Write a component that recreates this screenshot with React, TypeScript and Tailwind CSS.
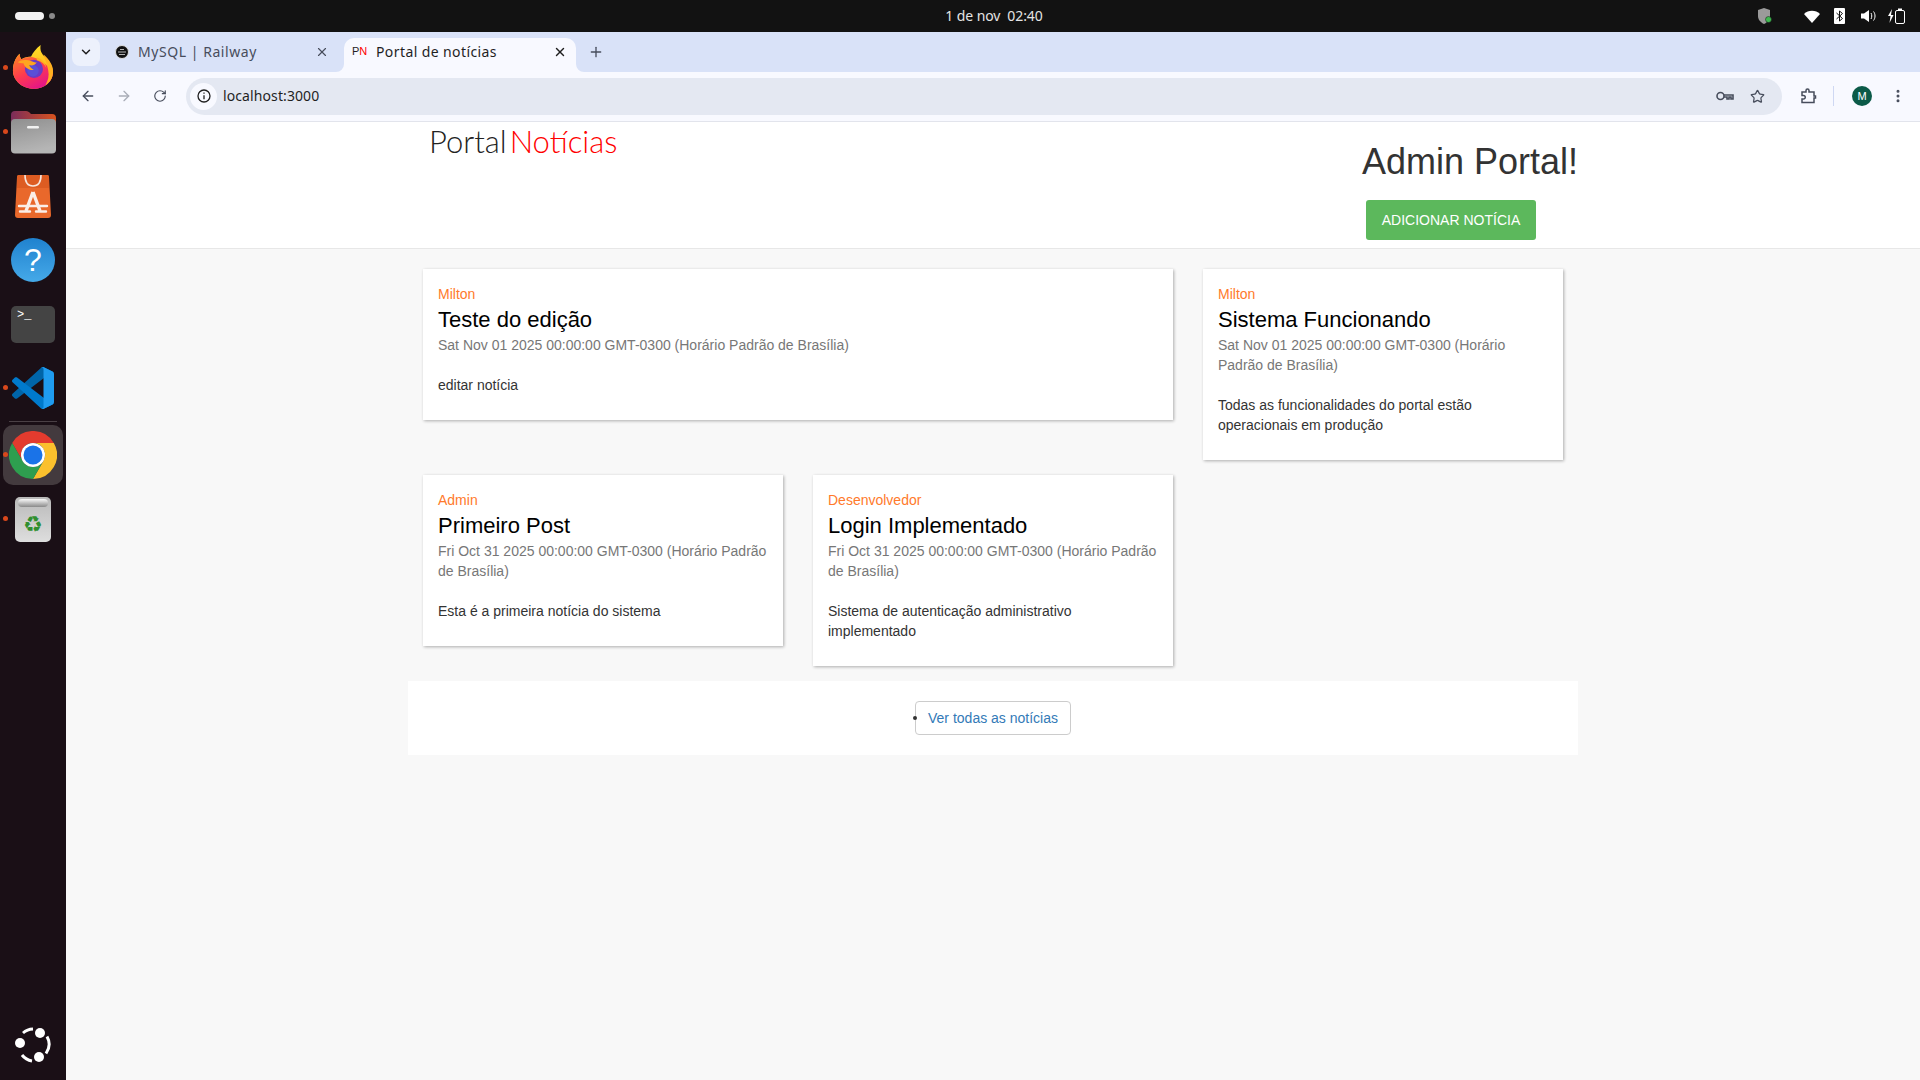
import { ArrowLeft, ArrowRight, ChevronDown, EllipsisVertical, Plus, RotateCw, Star, X } from 'lucide-react';

const news = [
  {
    author: 'Milton',
    title: 'Teste do edição',
    date: 'Sat Nov 01 2025 00:00:00 GMT-0300 (Horário Padrão de Brasília)',
    text: 'editar notícia',
    wide: true,
  },
  {
    author: 'Milton',
    title: 'Sistema Funcionando',
    date: 'Sat Nov 01 2025 00:00:00 GMT-0300 (Horário Padrão de Brasília)',
    text: 'Todas as funcionalidades do portal estão operacionais em produção',
  },
  {
    author: 'Admin',
    title: 'Primeiro Post',
    date: 'Fri Oct 31 2025 00:00:00 GMT-0300 (Horário Padrão de Brasília)',
    text: 'Esta é a primeira notícia do sistema',
  },
  {
    author: 'Desenvolvedor',
    title: 'Login Implementado',
    date: 'Fri Oct 31 2025 00:00:00 GMT-0300 (Horário Padrão de Brasília)',
    text: 'Sistema de autenticação administrativo implementado',
  },
];

const FirefoxIcon = () => (
  <svg width="42" height="44" viewBox="0 0 44 46">
    <defs>
      <linearGradient id="ffBody" x1="0" y1="0" x2="0.6" y2="1">
        <stop offset="0" stopColor="#ff8a1f" />
        <stop offset="0.55" stopColor="#ff3b4e" />
        <stop offset="1" stopColor="#e31587" />
      </linearGradient>
      <linearGradient id="ffFlame" x1="0.4" y1="0" x2="0.6" y2="1">
        <stop offset="0" stopColor="#ffe226" />
        <stop offset="1" stopColor="#ff9a1e" />
      </linearGradient>
    </defs>
    <path d="M30 0c-1 6 1 9 5 13 5 5 8 10 8 15 0 10-9 18-20 18S1 38 1 27C1 20 3 14 8 9c0 3 1 5 2 6 3-2 7-3 10-3 2-4 5-8 10-12z" fill="url(#ffFlame)" />
    <path d="M1 27C1 20 3 14 8 9c0 3 1 5 2 6 3-2 8-3 13-2 8 2 13 8 20 15 0 10-9 18-20 18S1 38 1 27z" fill="url(#ffBody)" />
    <path d="M33 10c6 5 10 11 10 18 0 6-3 11-8 14 3-5 4-10 3-15-1-6-3-11-5-17z" fill="#ffb020" />
    <circle cx="23" cy="25" r="9.500" fill="#6a3bc4" />
    <circle cx="22" cy="27" r="6" fill="#5a4fd6" />
    <path d="M6 18c3-2 6-3 11-2 4 .5 6 3 9 2-2 3-5 4-8 3 1 3 3 4 5 5-5 1-10-3-11-7-2 0-4 0-6-1z" fill="#ffa51f" />
    <path d="M26 13c5 1 9 5 10 11-2-4-5-7-10-8z" fill="#ffb31f" />
  </svg>
);

const FolderIcon = () => (
  <svg width="45" height="43" viewBox="0 0 45 43">
    <defs>
      <linearGradient id="folderBack" x1="0" y1="0" x2="1" y2="0">
        <stop offset="0" stopColor="#7a2c5a" />
        <stop offset="1" stopColor="#d9531e" />
      </linearGradient>
      <linearGradient id="folderFront" x1="0" y1="0" x2="0.3" y2="1">
        <stop offset="0" stopColor="#8f8f8f" />
        <stop offset="1" stopColor="#b5b5b5" />
      </linearGradient>
    </defs>
    <path d="M0 14V4a4 4 0 0 1 4-4h11c2 0 3 1 4 2l1 1h21a4 4 0 0 1 4 4v10H0z" fill="url(#folderBack)" />
    <rect x="0" y="8" width="45" height="34.5" rx="4" fill="url(#folderFront)" />
    <rect x="16" y="15" width="12" height="2.5" rx="1.2" fill="#f2f2f2" />
  </svg>
);

const StoreIcon = () => (
  <svg width="36" height="43" viewBox="0 0 36 43">
    <path d="M4 0h28a2 2 0 0 1 2 2l2 38a3 3 0 0 1-3 3H3a3 3 0 0 1-3-3L2 2a2 2 0 0 1 2-2z" fill="#e9682b" />
    <path d="M2 13h32v-11a2 2 0 0 0-2-2H4a2 2 0 0 0-2 2z" fill="#dd5c22" />
    <path d="M10 0c0 7 3 11 8 11s8-4 8-11" fill="none" stroke="#f6e5dc" strokeWidth="1.600" />
    <path d="M18 17 11 36M18 17l7 19" fill="none" stroke="#fbeee7" strokeWidth="3.400" />
    <path d="M4 31h28M5 36.500h10M21 36.500h10" fill="none" stroke="#fbeee7" strokeWidth="2.400" strokeLinecap="round" />
  </svg>
);

const VsCodeIcon = () => (
  <svg width="42" height="42" viewBox="0 0 100 100">
    <path d="M96.4614 10.7962L75.8569 0.875542C73.4719 -0.272773 70.6217 0.211611 68.75 2.08333L1.29858 63.5832C-0.515693 65.2373 -0.513607 68.0937 1.30308 69.7452L6.81272 74.754C8.29793 76.1042 10.5347 76.2036 12.1338 74.9905L93.3609 13.3699C96.086 11.3026 100 13.2462 100 16.6667V16.4275C100 14.0265 98.6246 11.8378 96.4614 10.7962Z" fill="#0065A9" />
    <path d="M96.4614 89.2038L75.8569 99.1245C73.4719 100.273 70.6217 99.7884 68.75 97.9167L1.29858 36.4168C-0.515693 34.7627 -0.513607 31.9063 1.30308 30.2548L6.81272 25.246C8.29793 23.8958 10.5347 23.7964 12.1338 25.0095L93.3609 86.6301C96.086 88.6974 100 86.7538 100 83.3333V83.5725C100 85.9735 98.6246 88.1622 96.4614 89.2038Z" fill="#007ACC" />
    <path d="M75.8578 99.1263C73.4721 100.274 70.6219 99.7885 68.75 97.9166C71.0564 100.223 75 98.5895 75 95.3278V4.67213C75 1.41039 71.0564 -0.223106 68.75 2.08329C70.6219 0.211402 73.4721 -0.273666 75.8578 0.873633L96.4587 10.7807C98.6234 11.8217 100 14.0112 100 16.4132V83.5871C100 85.9891 98.6234 88.1786 96.4586 89.2196L75.8578 99.1263Z" fill="#1F9CF0" />
  </svg>
);

const ChromeIcon = () => (
  <svg width="48" height="48" viewBox="0 0 48 48">
    <path d="M24 12h20.8A24 24 0 0 0 3.2 12l10.4 18A12 12 0 0 1 24 12z" fill="#e33b2e" />
    <path d="M44.8 12H24a12 12 0 0 1 10.4 18L24 48a24 24 0 0 0 20.8-36z" fill="#fbc02d" />
    <path d="M3.2 12l10.4 18a12 12 0 0 0 20.8 0L24 48A24 24 0 0 1 3.2 12z" fill="#2e9e4f" />
    <circle cx="24" cy="24" r="12" fill="#fff" />
    <circle cx="24" cy="24" r="9.5" fill="#1a73e8" />
  </svg>
);

const UbuntuIcon = () => (
  <svg width="40" height="40" viewBox="0 0 40 40">
    <circle cx="27" cy="9" r="5" fill="#fff" />
    <circle cx="7" cy="19" r="5" fill="#fff" />
    <circle cx="26" cy="33" r="5" fill="#fff" />
    <g fill="none" stroke="#fff" strokeWidth="3">
      <path d="M34 12.500a16 16 0 0 1-1 17" />
      <path d="M20 5a16 16 0 0 0-10 4" />
      <path d="M9 31a16 16 0 0 0 10 6" />
    </g>
  </svg>
);

const DockItem = ({ running, children }: { running?: boolean; children: React.ReactNode }) => (
  <div className="relative flex h-16 w-full items-center justify-center">
    {running && <span className="absolute left-[3px] top-[29px] h-[5px] w-[5px] rounded-full bg-[#d9481c]" />}
    {children}
  </div>
);

const Dock = () => (
  <aside className="flex w-[66px] shrink-0 flex-col items-center bg-[#1a0f16] pt-1 pb-[16px]">
    <DockItem running>
      <div className="-mt-[2px]">
        <FirefoxIcon />
      </div>
    </DockItem>
    <DockItem running>
      <FolderIcon />
    </DockItem>
    <DockItem>
      <StoreIcon />
    </DockItem>
    <DockItem>
      <div className="flex h-11 w-11 items-center justify-center rounded-full bg-gradient-to-b from-[#1f82cf] to-[#45a9e8] font-['Liberation_Sans',sans-serif] text-[32px] leading-none text-white">
        ?
      </div>
    </DockItem>
    <DockItem>
      <div className="h-[37px] w-11 rounded-[5px] bg-[#444444] pl-[6px] pt-[2px] font-['Liberation_Mono',monospace] text-[12px] leading-[14px] text-white">
        &gt;_
      </div>
    </DockItem>
    <DockItem running>
      <VsCodeIcon />
    </DockItem>
    <div className="my-px h-px w-12 bg-[#4a4045]" />
    <DockItem running>
      <div className="flex h-[60px] w-[60px] items-center justify-center rounded-[10px] bg-[#433a3e]">
        <ChromeIcon />
      </div>
    </DockItem>
    <DockItem running>
      <div className="flex h-[45px] w-9 flex-col items-center rounded-[5px] bg-gradient-to-b from-[#b9b9b9] to-[#dedede]">
        <div className="mt-[2px] h-[8px] w-[30px] rounded-sm bg-gradient-to-b from-[#fafafa] to-[#8a8a8a]" />
        <span className="mt-[7px] font-['DejaVu_Sans',sans-serif] text-[22px] leading-none text-[#2f8f2f]">♻</span>
      </div>
    </DockItem>
    <div className="mt-auto">
      <UbuntuIcon />
    </div>
  </aside>
);

const TopBar = () => (
  <div className="flex h-8 shrink-0 items-center bg-[#121212] text-[#e4e4e4]">
    <div className="flex w-[66px] shrink-0 items-center pl-[15px]">
      <span className="h-[8px] w-[29px] rounded-full bg-[#f2f2f2]" />
      <span className="ml-[5px] h-[6px] w-[6px] rounded-full bg-[#8a8a8a]" />
    </div>
    <div className="flex-1 whitespace-pre pb-[2px] pl-[165px] text-center font-['Noto_Sans',sans-serif] text-[14px] tracking-[-0.1px]">
      1 de nov  02:40
    </div>
    <div className="flex w-[163px] shrink-0 items-center">
      <svg width="14" height="16" viewBox="0 0 14 16" className="ml-[1px]">
        <path d="M6 0l6 2v6c0 4-3 6.500-6 8-3-1.500-6-4-6-8V2z" fill="#9a9a9a" />
        <circle cx="10.500" cy="11.500" r="3" fill="#3fb950" stroke="#121212" strokeWidth="0.500" />
      </svg>
      <svg width="16" height="13" viewBox="0 0 16 13" className="ml-[32px]">
        <path d="M0 4a11.500 11.500 0 0 1 16 0l-8 9z" fill="#fff" />
      </svg>
      <div className="ml-[14px] flex h-4 w-[11px] items-center justify-center rounded-[1px] bg-white">
        <svg width="7" height="12" viewBox="0 0 7 12" fill="none" stroke="#111" strokeWidth="1">
          <path d="M0.500 3l6 5.500L3.500 11V1l3 2.500-6 5.500" />
        </svg>
      </div>
      <svg width="15" height="14" viewBox="0 0 15 14" className="ml-[16px]">
        <path d="M0 4.500h3L8 1v12L3 9.500H0z" fill="#fff" />
        <path d="M10 4c1 1.500 1 4.500 0 6M12.500 2.500c2 2.500 2 6.500 0 9" fill="none" stroke="#fff" strokeWidth="1" />
      </svg>
      <svg width="17" height="16" viewBox="0 0 17 16" className="ml-[12px]">
        <path d="M4 1 0 8h2.500L1.500 15 5.500 7H3z" fill="#fff" />
        <rect x="7.500" y="2.500" width="9" height="13" rx="1.500" fill="none" stroke="#fff" />
        <rect x="10" y="0.500" width="4" height="2" fill="#fff" />
      </svg>
    </div>
  </div>
);

const TabCorner = ({ side }: { side: 'left' | 'right' }) => (
  <svg
    width="8"
    height="8"
    viewBox="0 0 8 8"
    className={side === 'left' ? 'absolute bottom-0 left-[-8px]' : 'absolute bottom-0 right-[-8px]'}
  >
    <path d={side === 'left' ? 'M8 0v8H0a8 8 0 0 0 8-8z' : 'M0 0v8h8a8 8 0 0 1-8-8z'} fill="#f8f9ff" />
  </svg>
);

const TabStrip = () => (
  <div className="flex h-10 shrink-0 items-end bg-[#d9e2f8] font-['Noto_Sans',sans-serif] text-[14px]">
    <div className="mb-[6px] ml-[6px] flex h-7 w-7 items-center justify-center rounded-lg bg-[#edf1fc] text-[#1f1f1f]">
      <ChevronDown size={14} strokeWidth={2.5} />
    </div>
    <div className="ml-[6px] flex h-[34px] w-[238px] items-center pb-[7px] pl-[9px] pr-[15px] text-[#474d5c]">
      <svg width="14" height="14" viewBox="0 0 14 14" className="shrink-0">
        <circle cx="7" cy="7" r="6.500" fill="#111" stroke="#ddd" />
        <path d="M3 7h8M4 9.500h6M5 4.500h4" stroke="#ddd" strokeWidth="0.800" />
      </svg>
      <span className="ml-[9px] flex-1 tracking-[0.55px]">MySQL | Railway</span>
      <X size={14} strokeWidth={2} className="text-[#474d5c]" />
    </div>
    <div className="relative flex h-[34px] w-[232px] items-center rounded-t-[10px] bg-[#f8f9ff] pb-[7px] pl-[8px] pr-[9px] text-[#1f1f1f]">
      <TabCorner side="left" />
      <span className="w-[24px] shrink-0 font-['Liberation_Sans',sans-serif] text-[11px] font-light">
        P<span className="text-[#f00]">N</span>
      </span>
      <span className="flex-1 tracking-[0.4px]">Portal de notícias</span>
      <X size={14} strokeWidth={2.5} />
      <TabCorner side="right" />
    </div>
    <div className="mb-[12px] ml-[12px] flex h-4 w-4 items-center justify-center text-[#474d5c]">
      <Plus size={16} strokeWidth={2} />
    </div>
  </div>
);

const ToolBar = () => (
  <div className="flex h-[50px] shrink-0 items-center border-b border-[#e2e4ec] bg-[#f8f9ff] pb-[1px] text-[#474d5c]">
    <ArrowLeft size={16} strokeWidth={2} className="ml-[14px]" />
    <ArrowRight size={16} strokeWidth={2} className="ml-[20px] text-[#a9adb8]" />
    <RotateCw size={14} strokeWidth={2} className="ml-[21px]" />
    <div className="ml-[19px] flex h-[37px] w-[1596px] items-center rounded-full bg-[#e4e8f2] pl-[4px] pr-[17px]">
      <div className="flex h-[27px] w-[27px] items-center justify-center rounded-full bg-[#f8f9ff]">
        <svg width="14" height="14" viewBox="0 0 14 14" fill="none" stroke="#1f1f1f" strokeWidth="1.300">
          <circle cx="7" cy="7" r="6" />
          <path d="M7 6.300v4M7 3.500v1.300" />
        </svg>
      </div>
      <span className="ml-[6px] flex-1 pb-[1px] font-['Noto_Sans',sans-serif] text-[14px] tracking-[0.1px] text-[#1f1f1f]">localhost:3000</span>
      <svg width="18" height="10" viewBox="0 0 18 10" fill="none" stroke="#474d5c" strokeWidth="1.600">
        <circle cx="4.500" cy="5" r="3.500" />
        <path d="M8 4h9v4h-2V6h-2v2h-2V6H8" />
      </svg>
      <Star size={15} strokeWidth={2} className="ml-[16px]" />
    </div>
    <svg width="16" height="16" viewBox="0 0 16 16" fill="none" stroke="#474d5c" strokeWidth="1.500" className="ml-[19px]">
      <path d="M1 4h4V2.500a1.500 1.500 0 0 1 3 0V4h5v4h1.500a1.500 1.500 0 0 1 0 .01V10H13v4.500H1V11h1.500a1.500 1.500 0 0 0 0-3.500H1z" />
    </svg>
    <div className="ml-[16px] h-5 w-px bg-[#cfd8f3]" />
    <div className="ml-[18px] flex h-5 w-5 items-center justify-center rounded-full bg-[#0b5a48] font-['Liberation_Sans',sans-serif] text-[11px] text-white">
      M
    </div>
    <EllipsisVertical size={16} strokeWidth={2.5} className="ml-[18px]" />
  </div>
);

const NewsCard = ({ item }: { item: (typeof news)[number] }) => (
  <article className={`${item.wide ? 'col-span-2' : ''} bg-white px-[15px] pt-[15px] pb-[25px] shadow-[1px_1px_3px_rgba(0,0,0,0.3)]`}>
    <p className="text-[14px] leading-5 text-[#ff7a2b]">{item.author}</p>
    <h3 className="text-[22px] leading-[31px] text-black">{item.title}</h3>
    <p className="text-[14px] leading-5 text-[#777777]">{item.date}</p>
    <p className="mt-5 text-[14px] leading-5 text-[#333333]">{item.text}</p>
  </article>
);

const Portal = () => (
  <div className="flex-1 bg-[#f8f8f8] font-['Liberation_Sans',sans-serif]">
    <header className="h-[127px] border-b border-[#e7e7e7] bg-white">
      <div className="mx-auto flex w-[1170px] justify-between">
        <div className="pl-[21px] pt-[1px] font-['Lato',sans-serif] text-[31px] font-light leading-[36px] text-[#222]">
          Portal<span className="ml-[3px] text-[#f00]">Notícias</span>
        </div>
        <div className="flex w-[216px] flex-col">
          <h1 className="mt-[20px] whitespace-nowrap text-[36px] leading-[40px] text-[#333333]">Admin Portal!</h1>
          <button className="ml-[4px] mt-[18px] h-10 w-[170px] rounded-[3px] bg-[#5cb85c] text-[14px] uppercase text-white">
            Adicionar notícia
          </button>
        </div>
      </div>
    </header>

    <main className="mx-auto mt-5 w-[1170px]">
      <div className="mx-[15px] grid grid-cols-3 items-start gap-x-[30px] gap-y-[15px]">
        {news.map((item) => (
          <NewsCard key={item.title} item={item} />
        ))}
      </div>
      <div className="mt-[15px] flex justify-center bg-white py-5">
        <div className="relative">
          <span className="absolute left-[-2px] top-[15px] h-1 w-1 rounded-full bg-[#333333]" />
          <a className="block h-[34px] w-[156px] rounded-[4px] border border-[#cccccc] text-center text-[14px] leading-[32px] text-[#337ab7]">
            Ver todas as notícias
          </a>
        </div>
      </div>
    </main>
  </div>
);

export default function App() {
  return (
    <div className="flex h-screen w-[1920px] flex-col overflow-hidden">
      <TopBar />
      <div className="flex min-h-0 flex-1">
        <Dock />
        <div className="flex min-w-0 flex-1 flex-col">
          <TabStrip />
          <ToolBar />
          <Portal />
        </div>
      </div>
    </div>
  );
}
